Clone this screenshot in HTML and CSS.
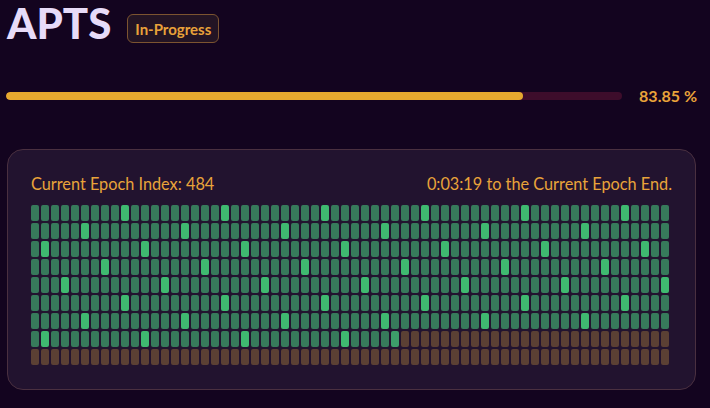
FILE: index.html
```html
<!DOCTYPE html>
<html lang="en">
<head>
<meta charset="utf-8">
<title>APTS</title>
<link rel="stylesheet" href="styles.css">
</head>
<body>
<div class="page">
  <header class="header">
    <h1 class="title">APTS</h1>
    <span class="badge">In-Progress</span>
  </header>
  <div class="progress-row">
    <div class="track"><div class="fill" style="width: 83.85%"></div></div>
    <span class="pct">83.85 %</span>
  </div>
  <section class="card">
    <div class="card-head">
      <span>Current Epoch Index: 484</span>
      <span>0:03:19 to the Current Epoch End.</span>
    </div>
    <div class="grid" id="grid" data-total="576" data-current="484"></div>
  </section>
</div>
<script src="script.js"></script>
</body>
</html>
```

FILE: styles.css
```css
html, body {
  margin: 0;
  padding: 0;
  background: #13041f;
}
body {
  font-family: Lato, "Open Sans", sans-serif;
  color: #e9a33a;
}
.page {
  padding: 2px 13px 0 6px;
}
.header {
  display: flex;
  align-items: flex-start;
  gap: 16px;
}
.title {
  margin: 0 0 0 1px;
  font-size: 42px;
  line-height: 42px;
  font-weight: 900;
  color: #e7dbf8;
}
.badge {
  margin-top: 12px;
  box-sizing: border-box;
  height: 29px;
  padding: 0 7px;
  display: flex;
  align-items: center;
  border: 1px solid #7c5430;
  border-radius: 6px;
  background: #231424;
  color: #e9a23a;
  font-size: 15px;
  font-weight: 700;
}
.progress-row {
  margin-top: 42px;
  height: 20px;
  display: flex;
  align-items: center;
  gap: 17px;
}
.track {
  flex: 1;
  height: 8px;
  border-radius: 4px;
  background: #3d0d2b;
  overflow: hidden;
}
.fill {
  height: 100%;
  border-radius: 4px;
  background: #e6a92f;
}
.pct {
  font-size: 16px;
  line-height: 20px;
  font-weight: 700;
  color: #e9a33a;
}
.card {
  margin: 43px 0 0 1px;
  box-sizing: border-box;
  width: 689px;
  border: 1px solid #4a3040;
  border-radius: 16px;
  background: #22132f;
  padding: 24px 23px 24px 23px;
}
.card-head {
  display: flex;
  justify-content: space-between;
  font-size: 16.3px;
  line-height: 20px;
  color: #e9a33a;
}
.grid {
  margin-top: 11px;
  display: grid;
  grid-template-columns: repeat(64, 8px);
  grid-auto-rows: 16px;
  gap: 2px;
}
.cell {
  border-radius: 2px;
  background: #5b4034;
}
.cell.done {
  background: #377a5b;
}
.cell.mark {
  background: #3fba70;
}
.cell.current {
  background: #3d9d6a;
}
```

FILE: script.js
```js
(function () {
  var grid = document.getElementById('grid');
  var total = parseInt(grid.dataset.total, 10);
  var current = parseInt(grid.dataset.current, 10);
  var frag = document.createDocumentFragment();
  for (var i = 0; i < total; i++) {
    var c = document.createElement('div');
    c.className = 'cell';
    if (i < current) {
      c.className += (i % 10 === 9) ? ' done mark' : ' done';
    } else if (i === current) {
      c.className += ' current';
    }
    frag.appendChild(c);
  }
  grid.appendChild(frag);
})();
```
